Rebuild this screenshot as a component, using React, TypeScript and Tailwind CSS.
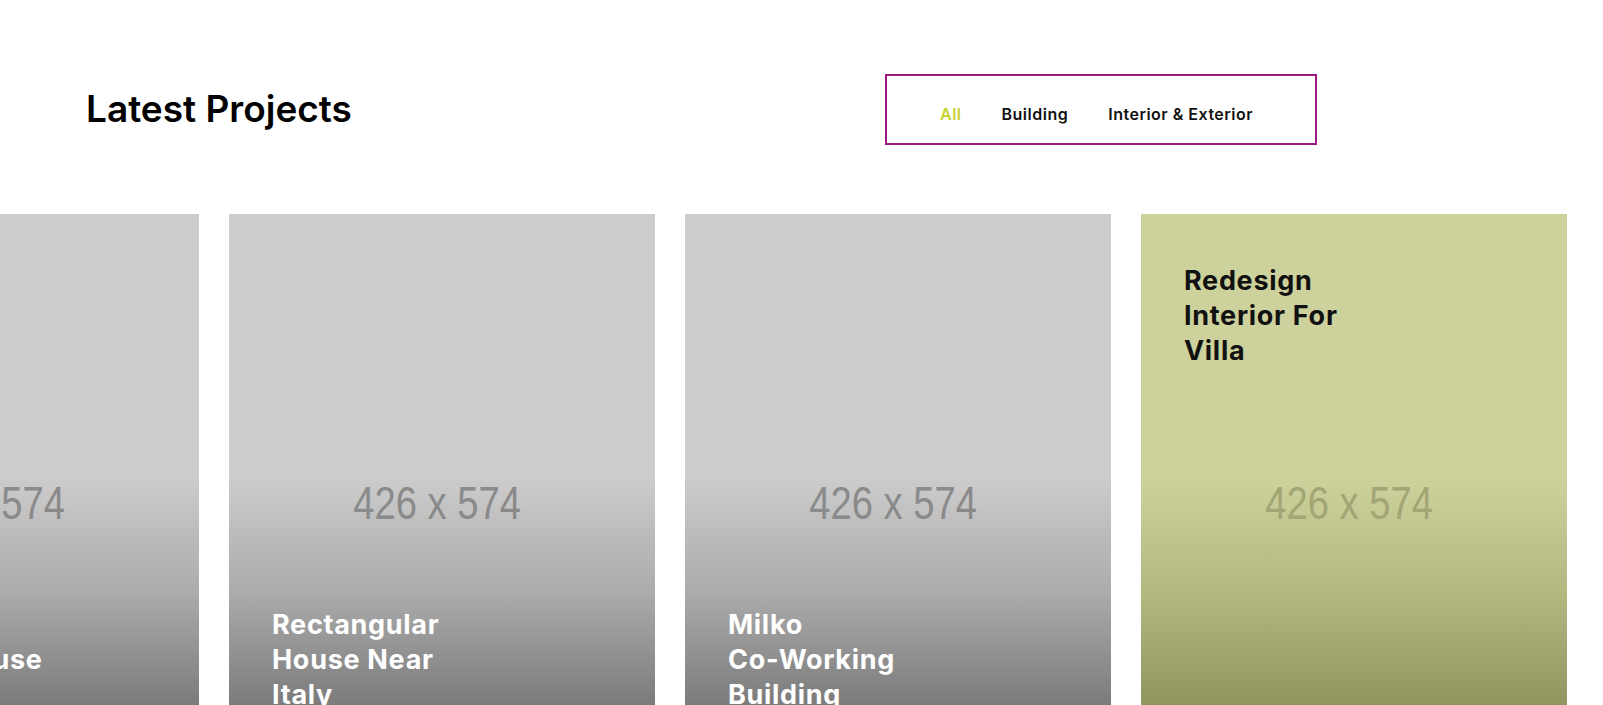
import React from "react";

type Card = {
  lines: string[];
  variant: "gray" | "green";
};

const cards: Card[] = [
  { lines: ["Modern", "Cool Warehouse"], variant: "gray" },
  { lines: ["Rectangular", "House Near", "Italy"], variant: "gray" },
  { lines: ["Milko", "Co-Working", "Building"], variant: "gray" },
  { lines: ["Redesign", "Interior For", "Villa"], variant: "green" },
];

function ProjectCard({ card }: { card: Card }) {
  const green = card.variant === "green";
  return (
    <div
      className={
        green
          ? "relative h-[574px] w-[426px] shrink-0 overflow-hidden bg-[linear-gradient(to_bottom,#cdd19b_0%,#cdd19b_46%,#b3b881_66%,#777b46_100%)]"
          : "relative h-[574px] w-[426px] shrink-0 overflow-hidden bg-[linear-gradient(to_bottom,#cccccc_0%,#cccccc_46%,#ababab_66%,#585858_100%)]"
      }
    >
      <div className="flex h-full w-full items-center justify-center pr-[10px] pt-[4px]">
        <span
          className={
            green
              ? "scale-x-[0.83] font-['Liberation_Sans',Arial,sans-serif] text-[46px] leading-none text-[#a2a675]"
              : "scale-x-[0.83] font-['Liberation_Sans',Arial,sans-serif] text-[46px] leading-none text-[#8a8a8a]"
          }
        >
          426 x 574
        </span>
      </div>
      <h3
        className={
          green
            ? "absolute left-[43px] top-[49px] text-[27px] font-bold leading-[35px] tracking-[0.7px] text-[#111111]"
            : "absolute left-[43px] top-[393px] text-[27px] font-bold leading-[35px] tracking-[0.7px] text-white"
        }
      >
        {card.lines.map((l, i) => (
          <span key={i} className="block whitespace-nowrap">
            {l}
          </span>
        ))}
      </h3>
    </div>
  );
}

export default function App() {
  return (
    <div className="h-[705px] w-full overflow-hidden bg-white font-['Inter',sans-serif] text-[#111111]">
      <div className="flex items-start pl-[86px] pr-[286px] pt-[74px]">
        <h2 className="mt-[16px] flex-1 text-[37px] font-semibold leading-none tracking-[0px] text-black">
          Latest Projects
        </h2>
        <div className="flex h-[71px] w-[432px] items-center gap-[40px] border-2 border-[#9c1a80] pl-[53px] pt-[9px]">
          <button className="text-[16px] font-semibold tracking-[0.5px] text-[#c5d22f]">All</button>
          <button className="text-[16px] font-semibold tracking-[0.5px] text-[#111111]">Building</button>
          <button className="text-[16px] font-semibold tracking-[0.5px] text-[#111111]">
            Interior &amp; Exterior
          </button>
        </div>
      </div>
      <div className="-ml-[227px] mt-[69px] flex gap-[30px]">
        {cards.map((c, i) => (
          <ProjectCard key={i} card={c} />
        ))}
      </div>
    </div>
  );
}
